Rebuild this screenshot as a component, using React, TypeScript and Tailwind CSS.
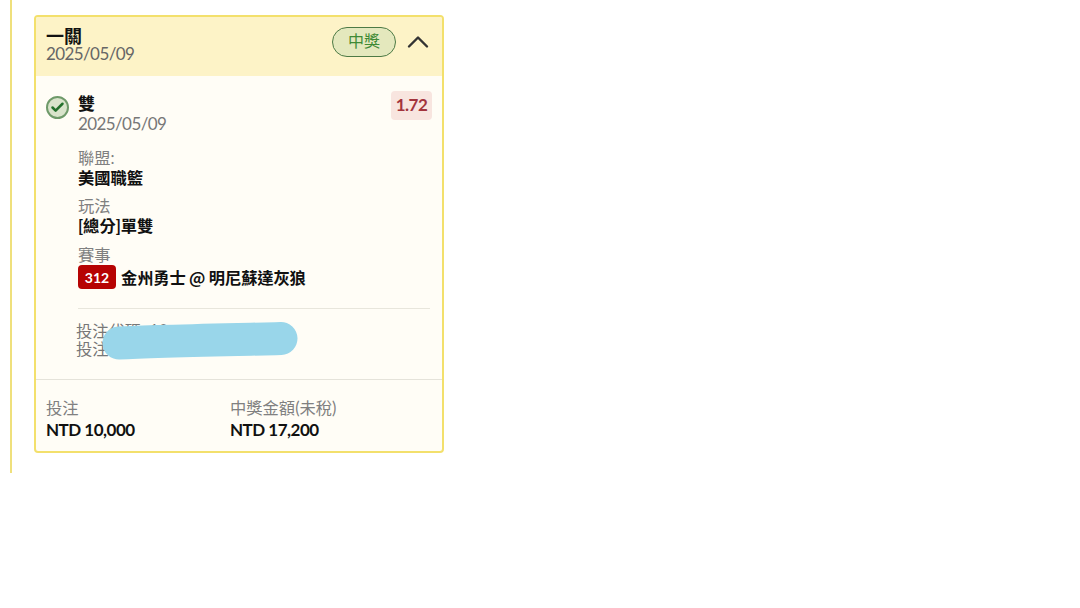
import { ChevronUp, Check } from "lucide-react";

const font = "font-['Lato','Noto_Sans_CJK_TC',sans-serif]";

// Label above a bold value, used by the leg details
function Field({ label, children }: { label: string; children: React.ReactNode }) {
  return (
    <div className="flex flex-col">
      <span className="text-[16.3px] leading-[18px] text-[#808080]">{label}</span>
      <div className="text-[16.3px] leading-[22px] font-bold text-[#111]">{children}</div>
    </div>
  );
}

export default function App() {
  return (
    <div className={`${font} min-h-[608px] bg-white`}>
      <div className="ml-[10px] w-fit border-l-2 border-[#efe07c] pl-[22px] pt-[15px] pb-[20px]">
        <div className="w-[410px] overflow-hidden rounded-[4px] border-2 border-[#f3e06c] bg-[#fffdf6]">
          {/* Header */}
          <header className="flex h-[59px] items-center justify-between bg-[#fdf3c7] pl-[10px] pr-[6px]">
            <div className="mb-[4px] flex flex-col">
              <span className="text-[18px] leading-[18px] font-bold text-[#111]">一關</span>
              <span className="text-[17px] leading-[18px] tracking-[-0.6px] text-[#666]">2025/05/09</span>
            </div>
            <div className="mb-[10px] flex items-center gap-[4px]">
              <span className="flex h-[30px] w-[64px] items-center justify-center rounded-full border border-[#4d7a45] bg-[#e4e8bd] pb-[2px] text-[16px] text-[#3f8a35]">
                中獎
              </span>
              <ChevronUp className="size-[36px] text-[#333]" strokeWidth={1.6} />
            </div>
          </header>

          {/* Leg */}
          <div className="px-[10px] pt-[15px]">
            <div className="flex items-start">
              <div className="mt-[5px] mr-[9px] flex size-[23px] items-center justify-center rounded-full border-2 border-[#6f9a6a] bg-[#d9e4cb]">
                <Check className="size-[15px] text-[#23702b]" strokeWidth={4} />
              </div>
              <div className="flex flex-1 flex-col">
                <span className="pt-[3px] text-[17px] leading-[20px] font-bold text-[#111]">雙</span>
                <span className="pt-[1px] text-[17px] leading-[18px] tracking-[-0.6px] text-[#777]">2025/05/09</span>
              </div>
              <span className="flex h-[29px] w-[41px] items-center justify-center rounded-[4px] bg-[#f8e5df] pb-[2px] text-[17px] tracking-[-0.5px] font-bold text-[#a3343c]">
                1.72
              </span>
            </div>

            <div className="mt-[16px] ml-[32px] flex flex-col gap-[8px]">
              <Field label="聯盟:">美國職籃</Field>
              <Field label="玩法">[總分]單雙</Field>
              <div className="mt-[1px] flex flex-col">
                <span className="text-[16.3px] leading-[18px] text-[#808080]">賽事</span>
                <div className="mt-[1px] flex items-center gap-[5px]">
                  <span className="flex h-[24px] w-[38px] items-center justify-center rounded-[4px] bg-[#b60303] text-[14px] font-bold text-white">
                    312
                  </span>
                  <span className="font-['Noto_Sans_CJK_TC',sans-serif] text-[16.3px] leading-[24px] tracking-[-0.15px] font-bold text-[#111]">
                    金州勇士 @ 明尼蘇達灰狼
                  </span>
                </div>
              </div>
            </div>

            <div className="mt-[19px] mr-[2px] ml-[32px] border-t border-[#e8e6dc] pt-[13px] pb-[21px]">
              <div className="relative text-[16.3px] leading-[18px] text-[#777]">
                <div className="-ml-[2px]">投注代碼: 10</div>
                <div className="-ml-[2px]">投注</div>
                {/* Painted-over scribble */}
                <svg className="absolute -top-[1px] -left-[2px]" width="240" height="40" viewBox="0 0 240 40">
                  <path d="M43 22 C80 20 190 18 205 17.5" fill="none" stroke="#99d6ea" strokeWidth="33" strokeLinecap="round" />
                </svg>
              </div>
            </div>
          </div>

          {/* Totals */}
          <div className="grid grid-cols-[184px_1fr] border-t border-[#e5e3da] px-[10px] pt-[18px] pb-[9px]">
            <div className="flex flex-col">
              <span className="text-[16.3px] leading-[20px] text-[#808080]">投注</span>
              <span className="text-[17px] leading-[24px] tracking-[-0.5px] font-bold text-[#111]">NTD 10,000</span>
            </div>
            <div className="flex flex-col">
              <span className="text-[16.3px] leading-[20px] text-[#808080]">中獎金額(未稅)</span>
              <span className="text-[17px] leading-[24px] tracking-[-0.5px] font-bold text-[#111]">NTD 17,200</span>
            </div>
          </div>
        </div>
      </div>
    </div>
  );
}
